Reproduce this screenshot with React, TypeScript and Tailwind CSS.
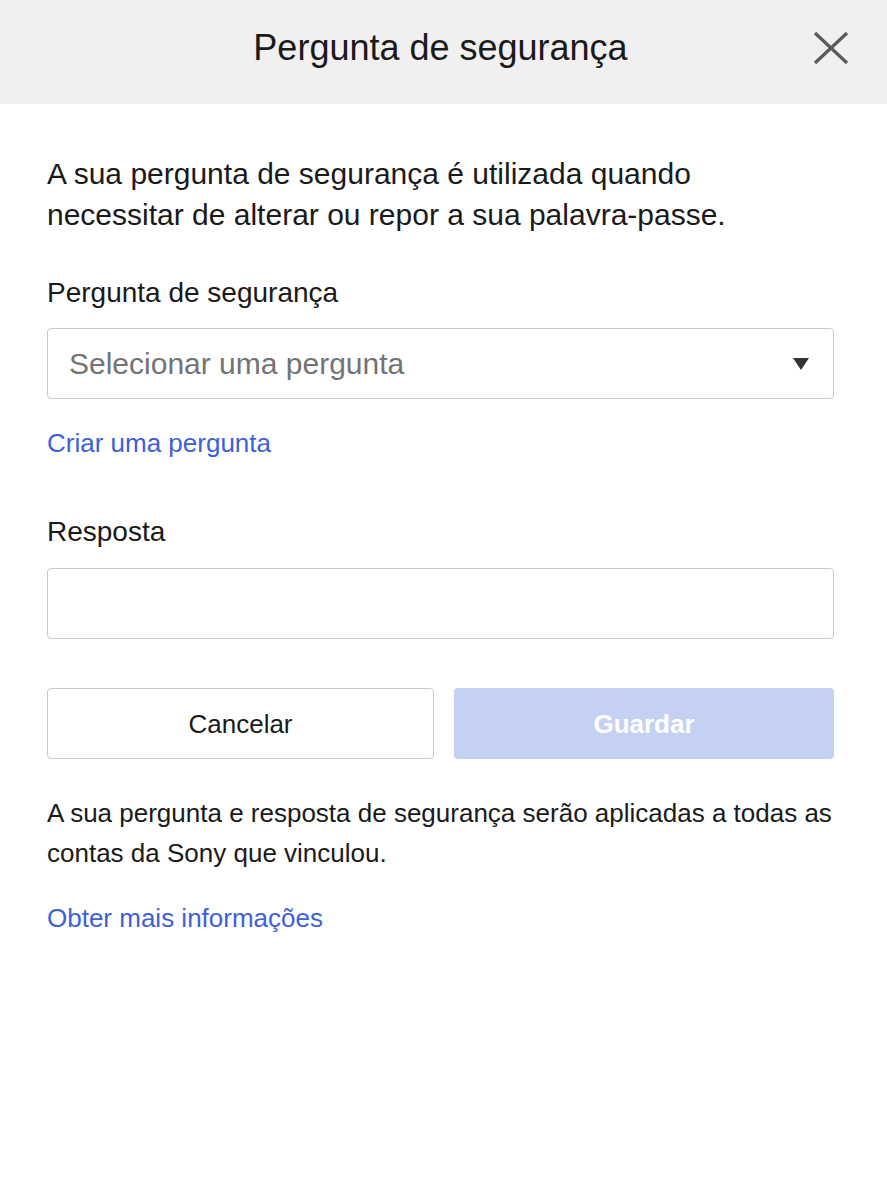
const App = () => {
  return (
    <div
      className="min-h-screen w-[887px] bg-white text-[#1a1a1a]"
      style={{ fontFamily: '"Liberation Sans", Arial, sans-serif' }}
    >
      {/* Header */}
      <header className="relative h-[104px] bg-[#f0f0f0] flex items-center justify-center">
        <h1 className="text-[36px] leading-none text-[#1a1a1a] -mt-[8px] -ml-[6px]">Pergunta de segurança</h1>
        <button className="absolute right-[36px] top-[30px] w-[40px] h-[36px] flex items-center justify-center">
          <svg width="36" height="34" viewBox="0 0 36 34">
            <path d="M2 2 L34 32 M34 2 L2 32" stroke="#5a5a5a" strokeWidth="3.2" strokeLinecap="butt" />
          </svg>
        </button>
      </header>

      {/* Body */}
      <div className="pl-[47px] pr-[53px] pt-[49px] text-[26px] leading-[40px]">
        <p className="text-[30px] leading-[41px]">
          A sua pergunta de segurança é utilizada quando
          <br />
          necessitar de alterar ou repor a sua palavra-passe.
        </p>

        <label className="block mt-[38px] text-[28px]">Pergunta de segurança</label>
        <div className="mt-[15px] h-[71px] border border-[#c9c9c9] rounded-[4px] flex items-center justify-between pl-[21px] pr-[24px]">
          <span className="text-[#737373] text-[30px]">Selecionar uma pergunta</span>
          <svg width="16" height="12" viewBox="0 0 16 12">
            <path d="M0 0 H16 L8 12 Z" fill="#333333" />
          </svg>
        </div>

        <a className="block mt-[24px] text-[#3d5fd8]" href="#">
          Criar uma pergunta
        </a>

        <label className="block mt-[49px] text-[28px]">Resposta</label>
        <div className="mt-[16px] h-[71px] border border-[#c9c9c9] rounded-[4px]" />

        <div className="mt-[49px] flex gap-[20px]">
          <button className="w-[387px] h-[71px] border border-[#c9c9c9] rounded-[4px] bg-white text-[#1a1a1a]">
            Cancelar
          </button>
          <button className="w-[380px] h-[71px] rounded-[4px] bg-[#c5d1f2] text-white font-bold">
            Guardar
          </button>
        </div>

        <p className="mt-[34px] whitespace-nowrap">
          A sua pergunta e resposta de segurança serão aplicadas a todas as
          <br />
          contas da Sony que vinculou.
        </p>

        <a className="block mt-[25px] text-[#3d5fd8]" href="#">
          Obter mais informações
        </a>
      </div>
    </div>
  )
}

export default App
